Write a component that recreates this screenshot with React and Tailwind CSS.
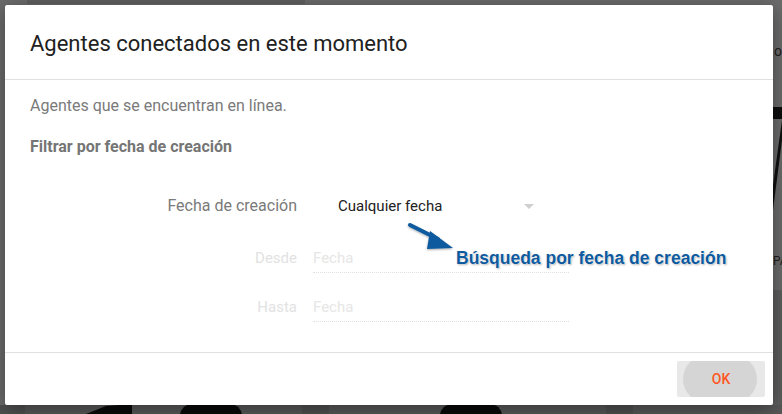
import React from "react";

export default function App() {
  return (
    <div className="relative h-[414px] w-[782px] overflow-hidden bg-[#6c6c6c]" style={{ fontFamily: "Roboto, 'Liberation Sans', sans-serif" }}>
      {/* background page bits behind overlay */}
      <div className="absolute left-[27px] top-0 h-[4px] w-[278px] bg-[#606060]" />
      <div className="absolute left-[774px] top-[44px] text-[14px] leading-none text-[#1e1e1e]">o</div>
      <div className="absolute left-[773px] top-[107px] h-[12px] w-[9px] bg-[#0e0e0e]" />
      <svg className="absolute left-[773px] top-[120px]" width="9" height="90" viewBox="0 0 9 90">
        <polygon points="9,0 9,20 0,90 0,65" fill="#111" />
      </svg>
      <div className="absolute left-[773px] top-[255px] w-[9px] overflow-hidden text-[12px] leading-none text-[#1e1e1e]">PA</div>
      <div className="absolute left-[773px] top-[290px] h-[124px] w-[9px] bg-[#5e5e5e]" />
      <div className="absolute left-0 top-[405px] flex h-[9px] w-[782px] bg-[#505050]">
        <div className="ml-[25px] h-full w-[280px] bg-[#585858]" />
        <div className="ml-[27px] h-full w-[280px] bg-[#585858]" />
        <div className="ml-[27px] h-full w-[150px] bg-[#585858]" />
      </div>
      <svg className="absolute left-[86px] top-[404px]" width="48" height="10" viewBox="0 0 48 10">
        <polygon points="20,2 46,0 46,10 0,10" fill="#0a0a0a" />
      </svg>
      <div className="absolute left-[180px] top-[404px] h-[12px] w-[62px] rounded-t-full border-[10px] border-b-0 border-[#0a0a0a]" />
      <div className="absolute left-[440px] top-[404px] h-[12px] w-[62px] rounded-t-full border-[10px] border-b-0 border-[#0a0a0a]" />

      {/* dialog */}
      <div className="absolute left-[5px] top-[5px] flex h-[400px] w-[768px] flex-col rounded-[2px] bg-white shadow-[0_4px_20px_rgba(0,0,0,0.4)]">
        <div className="flex h-[75px] shrink-0 items-center border-b border-[#e0e0e0] pl-[25px] pt-[4px]">
          <h1 className="text-[22px] leading-none text-[#212121]">Agentes conectados en este momento</h1>
        </div>
        <div className="relative flex-1 border-b border-[#e0e0e0] pl-[25px] pt-[16px]">
          <p className="text-[16px] leading-[20px] text-[#7a7a7a]">Agentes que se encuentran en línea.</p>
          <p className="mt-[21px] text-[16px] font-bold leading-[20px] text-[#757575]">Filtrar por fecha de creación</p>

          <div className="mt-[39px] flex items-center">
            <div className="w-[267px] text-right text-[16px] leading-[20px] text-[#7a7a7a]">Fecha de creación</div>
            <div className="ml-[41px] flex w-[196px] items-center justify-between">
              <span className="text-[15px] leading-[20px] text-[#212121]">Cualquier fecha</span>
              <svg width="10" height="5" viewBox="0 0 10 5">
                <polygon points="0,0 10,0 5,5" fill="#d0d0d0" />
              </svg>
            </div>
          </div>

          <div className="mt-[32px] flex items-start">
            <div className="w-[267px] text-right text-[15px] leading-[20px] text-[#e2e2e2]">Desde</div>
            <div className="ml-[16px] w-[256px] border-b border-dotted border-[#e0e0e0] pb-[4px] text-[15px] leading-[20px] text-[#e6e6e6]">Fecha</div>
          </div>

          <div className="mt-[24px] flex items-start">
            <div className="w-[267px] text-right text-[15px] leading-[20px] text-[#e2e2e2]">Hasta</div>
            <div className="ml-[16px] w-[256px] border-b border-dotted border-[#e0e0e0] pb-[4px] text-[15px] leading-[20px] text-[#e6e6e6]">Fecha</div>
          </div>

          {/* annotation */}
          <svg className="absolute left-[401px] top-[142px]" width="54" height="32" viewBox="0 0 54 32">
            <defs>
              <filter id="sh" x="-20%" y="-20%" width="140%" height="140%">
                <feDropShadow dx="0" dy="1" stdDeviation="1" floodColor="#000" floodOpacity="0.35" />
              </filter>
            </defs>
            <g filter="url(#sh)">
              <line x1="4" y1="3" x2="32" y2="17" stroke="#0d5a9e" strokeWidth="4" strokeLinecap="round" />
              <polygon points="24,9 47,26 21,27" fill="#0d5a9e" />
            </g>
          </svg>
          <div
            className="absolute left-[451px] top-[168px] text-[17.5px] font-bold leading-[20px] text-[#0d5a9e]"
            style={{
              fontFamily: "'Liberation Sans', Arial, sans-serif",
              textShadow: "0 0 1px #fff, 0 0 2px #fff, 1px 1px 2px rgba(0,0,0,0.35)",
            }}
          >
            Búsqueda por fecha de creación
          </div>
        </div>
        <div className="flex h-[52px] shrink-0 items-start justify-end pr-[8px] pt-[8px]">
          <button className="relative flex h-[36px] w-[88px] items-center justify-center overflow-hidden rounded-[2px] bg-[#e8e8e8]">
            <span className="absolute left-[6px] top-[-6px] h-[48px] w-[74px] rounded-full bg-[#d5d5d5]" />
            <span className="relative text-[14px] font-medium text-[#ff5722]">OK</span>
          </button>
        </div>
      </div>
    </div>
  );
}
